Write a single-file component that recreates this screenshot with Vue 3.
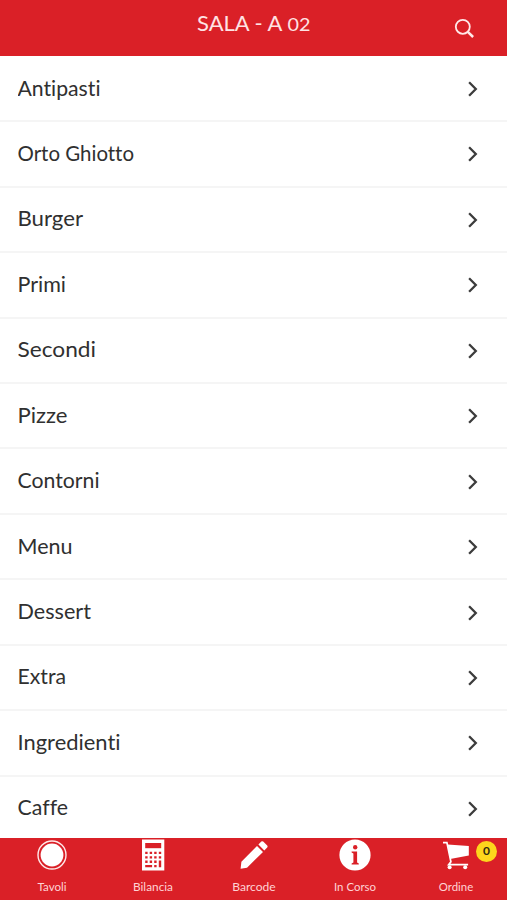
<script setup>
const categories = [
  { name: 'Antipasti', width: 83 },
  { name: 'Orto Ghiotto', width: 116.5 },
  { name: 'Burger', width: 65.5 },
  { name: 'Primi', width: 48.5 },
  { name: 'Secondi', width: 78.5 },
  { name: 'Pizze', width: 50 },
  { name: 'Contorni', width: 82 },
  { name: 'Menu', width: 55 },
  { name: 'Dessert', width: 73.5 },
  { name: 'Extra', width: 48.5 },
  { name: 'Ingredienti', width: 103 },
  { name: 'Caffe', width: 50.5 },
]

const tabs = [
  { name: 'Tavoli', icon: 'tables', width: 29 },
  { name: 'Bilancia', icon: 'scale', width: 40 },
  { name: 'Barcode', icon: 'pencil', width: 43.5 },
  { name: 'In Corso', icon: 'info', width: 42 },
  { name: 'Ordine', icon: 'cart', width: 34.5 },
]
</script>

<template>
  <div class="screen">
    <header class="header">
      <span class="side"></span>
      <h1 class="title">
        <svg width="116" height="32" viewBox="0 0 116 32">
          <text x="1" y="24" textLength="85.5" lengthAdjust="spacingAndGlyphs">SALA - A</text>
          <text class="digits" x="91.5" y="24" textLength="23" lengthAdjust="spacingAndGlyphs">02</text>
        </svg>
      </h1>
      <button class="side search" aria-label="Cerca">
        <svg width="22" height="22" viewBox="0 0 22 22">
          <circle cx="8.8" cy="8.8" r="7" />
          <path d="M13.8 13.8 19.1 19" class="handle" />
        </svg>
      </button>
    </header>

    <main class="list">
      <div v-for="item in categories" :key="item.name" class="row">
        <svg class="label" width="200" height="32" viewBox="0 0 200 32">
          <text x="-0.5" y="23" :textLength="item.width" lengthAdjust="spacingAndGlyphs">{{ item.name }}</text>
        </svg>
        <svg class="chevron" width="10" height="16" viewBox="0 0 10 16">
          <path d="M1.1 1.3 7.8 8 1.1 14.7" />
        </svg>
      </div>
    </main>

    <nav class="tabs">
      <button v-for="tab in tabs" :key="tab.name" class="tab">
        <svg v-if="tab.icon === 'tables'" class="icon" viewBox="0 0 34 34">
          <circle cx="17" cy="17" r="14" fill="none" stroke="#ffe9e9" stroke-width="1.4" />
          <circle cx="17" cy="17" r="11.4" fill="#fff" />
        </svg>
        <svg v-else-if="tab.icon === 'scale'" class="icon" viewBox="0 0 34 34">
          <path fill="#fff" d="M6 1.5h22.3v31H6z" />
          <g fill="#da2027">
            <path d="M9.2 5h16v5.2h-16z" />
            <path d="M9.2 13.7h2.4V16H9.2zm4.5 0h2.4V16h-2.4zm4.5 0h2.4V16h-2.4zm4.6 0h2.4V16h-2.4z" />
            <path d="M9.2 18.2h2.4v2.3H9.2zm4.5 0h2.4v2.3h-2.4zm4.5 0h2.4v2.3h-2.4zm4.6 0h2.4v2.3h-2.4z" />
            <path d="M9.2 22.6h2.4v2.3H9.2zm4.5 0h2.4v2.3h-2.4zm4.5 0h2.4v2.3h-2.4zm4.6 0h2.4v6.6h-2.4z" />
            <path d="M9.2 27h6.9v2.2H9.2zm9 0h2.4v2.2h-2.4z" />
          </g>
        </svg>
        <svg v-else-if="tab.icon === 'pencil'" class="icon" viewBox="0 0 34 34">
          <path
            fill="#fff"
            d="M20 7.9 26 13.9 10 29.8 3.6 30.7 4.4 23.7z M21.4 6.4 24.3 3.6Q25.3 2.8 26.2 3.6L30.2 7.5Q31 8.5 30.2 9.4L27.3 12.4z"
          />
        </svg>
        <svg v-else-if="tab.icon === 'info'" class="icon" viewBox="0 0 34 34">
          <circle cx="17" cy="17" r="15.6" fill="#fff" />
          <circle cx="17.2" cy="9.3" r="2.2" fill="#da2027" />
          <path fill="#da2027" d="M13.6 13.4h5.5v11.2l1.7.8v1.1h-7.2v-1.1l1.8-.8v-9.2l-1.8-.8z" />
        </svg>
        <svg v-else class="icon" viewBox="0 0 34 34">
          <path fill="#fff" d="M8.6 6.5 29.8 8v9.6L11.2 21z" />
          <path fill="none" stroke="#fff" stroke-width="1.7" d="M4 4.7h3.9l4 19.1-2.2 2.8h19.4" />
          <circle cx="10.6" cy="29.3" r="2" fill="#fff" />
          <circle cx="26.2" cy="29.3" r="2" fill="#fff" />
        </svg>
        <svg class="caption" width="60" height="16" viewBox="0 0 60 16">
          <text :x="30 - tab.width / 2" y="12.5" :textLength="tab.width" lengthAdjust="spacingAndGlyphs">{{ tab.name }}</text>
        </svg>
        <span v-if="tab.icon === 'cart'" class="badge">0</span>
      </button>
    </nav>
  </div>
</template>

<style>
body {
  margin: 0;
  background: #fff;
}
</style>

<style scoped>
.screen {
  display: flex;
  flex-direction: column;
  width: 100%;
  height: 900px;
  overflow: hidden;
  font-family: Lato, 'Open Sans', sans-serif;
  font-variant-ligatures: none;
  background: #fff;
}
button {
  padding: 0;
  border: 0;
  background: none;
  font: inherit;
}
.header {
  display: flex;
  flex: 0 0 56px;
  justify-content: space-between;
  background: #da2027;
}
.side {
  width: 66px;
}
.title {
  margin: 7px 0 0;
  font-size: 20.5px;
  font-weight: 400;
  line-height: 1;
}
.title text {
  fill: #ffe3e4;
}
.title .digits {
  font-size: 18px;
}
.search {
  display: flex;
  align-items: flex-start;
  padding: 18px 0 0 13px;
  box-sizing: border-box;
}
.search svg {
  fill: none;
  stroke: #ffe9e9;
  stroke-width: 1.8;
}
.search .handle {
  stroke-width: 2.5;
}
.list {
  flex: 1 1 0;
  min-height: 0;
  padding-top: 0.8px;
  overflow: hidden;
}
.row {
  display: flex;
  box-sizing: border-box;
  height: 65.45px;
  align-items: center;
  justify-content: space-between;
  padding: 0 29px 0 18px;
  border-bottom: 2px solid #f5f5f5;
}
.label {
  font-size: 20.5px;
  fill: #303030;
}
.chevron {
  margin-top: 1px;
  fill: none;
  stroke: #3c3c3c;
  stroke-width: 2.3;
}
.tabs {
  display: grid;
  flex: 0 0 62px;
  grid-template-columns: repeat(5, 1fr);
  padding-left: 1px;
  background: #da2027;
}
.tab {
  position: relative;
  display: flex;
  flex-direction: column;
  align-items: center;
}
.icon {
  width: 34px;
  height: 34px;
}
.caption {
  margin-top: 6px;
  font-size: 11px;
  fill: #ffd3d5;
}
.badge {
  position: absolute;
  top: 3px;
  right: 10px;
  width: 21px;
  height: 21px;
  border-radius: 50%;
  background: #fdd61c;
  color: #302b10;
  font-size: 12px;
  font-weight: 700;
  line-height: 20px;
  text-align: center;
}
</style>
